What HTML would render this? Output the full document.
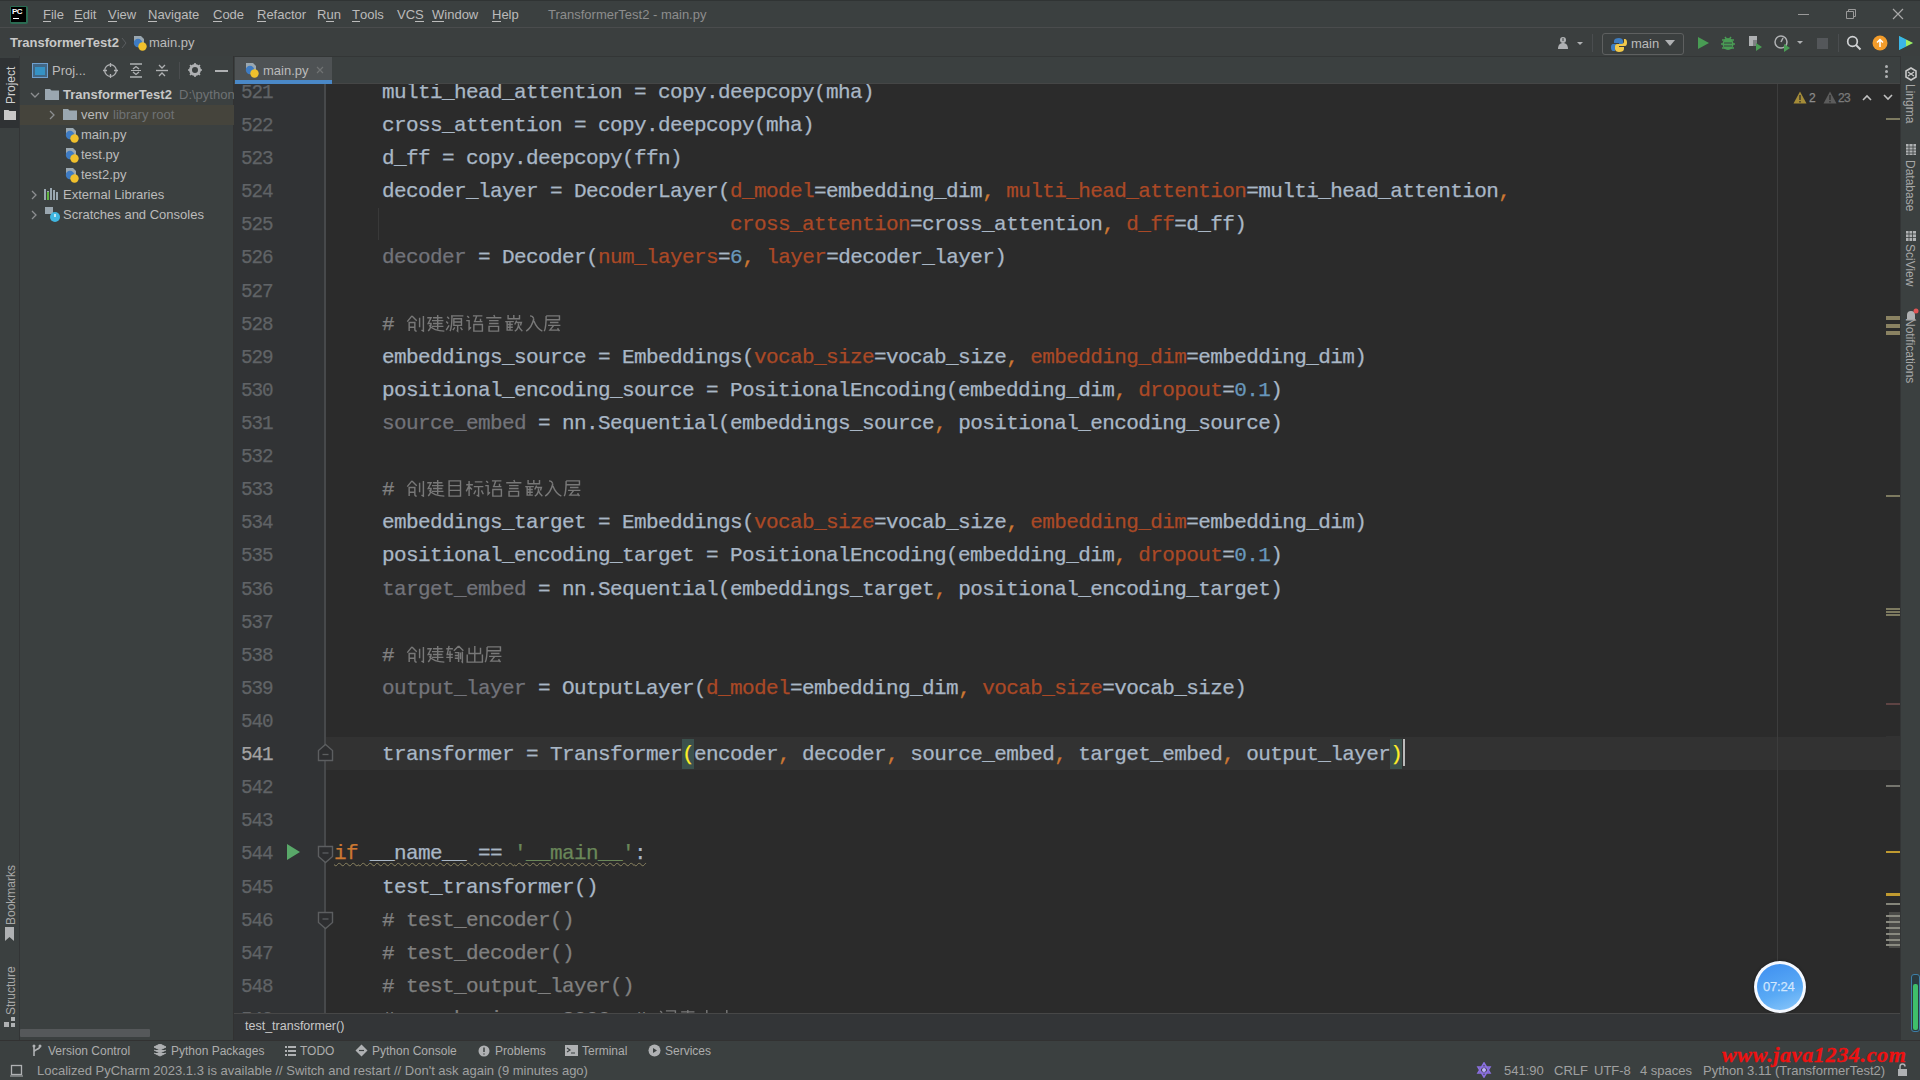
<!DOCTYPE html>
<html><head><meta charset="utf-8">
<style>
*{margin:0;padding:0;box-sizing:border-box}
html,body{width:1920px;height:1080px;overflow:hidden;background:#3b4040;font-family:"Liberation Sans",sans-serif;color:#bbbbbb}
.a{position:absolute}
.ui{font-size:13px;white-space:nowrap}
.tb{top:3px;font-size:12px;color:#adadad}
.st{top:3px;font-size:13px;color:#a0a0a0}
.rv{transform-origin:0 0;transform:rotate(90deg);font-size:12px;color:#a8a8a8}
.mk{left:1561px;width:14px;height:2px}
.mi{top:6px;color:#bbbbbb}
.mi u{text-decoration:none;border-bottom:1px solid #bbbbbb;line-height:13px;display:inline-block}
#menubar{left:0;top:0;width:1920px;height:28px;background:#3b4040;border-top:1px solid #303434;border-bottom:1px solid #4a4c4d}
#navbar{left:0;top:28px;width:1920px;height:29px;background:#3b3f3f;border-bottom:1px solid #333636}
#lstripe{left:0;top:56px;width:20px;height:984px;background:#3b4040;border-right:1px solid #333536}
#proj{left:20px;top:56px;width:214px;height:984px;background:#3b4040;border-right:1px solid #323232}
#tabs{left:234px;top:57px;width:1666px;height:27px;background:#3b4040;border-bottom:1px solid #454646}
#gutter{left:234px;top:84px;width:91px;height:929px;background:#313335;overflow:hidden}
#editor{left:325px;top:84px;width:1575px;height:929px;background:#2b2b2b;overflow:hidden}
#crumbs{left:234px;top:1013px;width:1666px;height:27px;background:#333537;border-top:1px solid #474747}
#rstripe{left:1900px;top:56px;width:20px;height:984px;background:#3b4040;border-left:1px solid #333536}
#toolbar{left:0;top:1040px;width:1920px;height:20px;background:#3b4040;border-top:1px solid #323232}
#status{left:0;top:1060px;width:1920px;height:20px;background:#3b4040}
.code{font-family:"Liberation Mono",monospace;font-size:21px;letter-spacing:-0.6px;white-space:pre;color:#a9b7c6;-webkit-text-stroke:0.25px}
.ln{position:absolute;left:0;width:38.5px;padding-top:1.6px;text-align:right;font-family:"Liberation Mono",monospace;font-size:21px;letter-spacing:-1.2px;transform:scaleX(0.92);transform-origin:100% 50%;color:#606366;height:33px;line-height:33px;white-space:pre}
.ln.cur{color:#a4a3a3}
.line{position:absolute;left:9px;right:0;height:33.11px;line-height:33.11px;padding-top:1.6px}
.line.cur{background:#323232;left:0;padding-left:9px}
.k{color:#cc7832}.n{color:#aa4926}.num{color:#6897bb}.u{color:#72737a}.c{color:#808080}.s{color:#6a8759}
.mp{color:#ffef28;background:#3b514d;padding:4px 0 3px}
.wv{text-decoration:underline wavy #8a8260;text-decoration-thickness:1px;text-underline-offset:3px;text-decoration-skip-ink:none}
.cj{display:inline-block;width:19.6px;height:19px;vertical-align:-3px}
</style></head><body>
<div id="menubar" class="a">
<div class="a" style="left:10px;top:5px;width:18px;height:18px;background:#2a6b52;border-radius:2px"></div>
<div class="a" style="left:11px;top:6px;width:15px;height:15px;background:#000"></div>
<div class="a" style="left:12px;top:6px;font:bold 8px 'Liberation Sans',sans-serif;color:#fff;letter-spacing:-0.5px">PC</div>
<div class="a" style="left:13px;top:17px;width:6px;height:1px;background:#fff"></div>
<div class="a ui mi" style="left:43px"><u>F</u>ile</div>
<div class="a ui mi" style="left:74px"><u>E</u>dit</div>
<div class="a ui mi" style="left:108px"><u>V</u>iew</div>
<div class="a ui mi" style="left:148px"><u>N</u>avigate</div>
<div class="a ui mi" style="left:213px"><u>C</u>ode</div>
<div class="a ui mi" style="left:257px"><u>R</u>efactor</div>
<div class="a ui mi" style="left:317px">R<u>u</u>n</div>
<div class="a ui mi" style="left:352px"><u>T</u>ools</div>
<div class="a ui mi" style="left:397px">VC<u>S</u></div>
<div class="a ui mi" style="left:432px"><u>W</u>indow</div>
<div class="a ui mi" style="left:492px"><u>H</u>elp</div>
<div class="a ui" style="left:548px;top:6px;color:#8d8d8d">TransformerTest2 - main.py</div>
<div class="a" style="left:1798px;top:13px;width:11px;height:1px;background:#9a9a9a"></div>
<svg class="a" style="left:1845px;top:7px" width="12" height="12" viewBox="0 0 12 12"><path d="M1.5 3.5h7v7h-7z M3.5 3.5v-2h7v7h-2" fill="none" stroke="#9a9a9a" stroke-width="1"/></svg>
<svg class="a" style="left:1892px;top:7px" width="12" height="12" viewBox="0 0 12 12"><path d="M1 1L11 11M11 1L1 11" stroke="#a8a8a8" stroke-width="1.2"/></svg>
</div>
<div id="navbar" class="a">
<div class="a ui" style="left:10px;top:7px;font-weight:bold;color:#c8c8c8">TransformerTest2</div>
<svg class="a" style="left:121px;top:9px" width="6" height="12" viewBox="0 0 6 12"><path d="M1 1l4 5-4 5" fill="none" stroke="#5a5d60" stroke-width="1"/></svg>
<svg class="a" style="left:132px;top:7px" width="16" height="16" viewBox="0 0 16 16"><path d="M2 1h7l3 3v5H2z" fill="#9aa7b0"/><circle cx="6" cy="8" r="4.2" fill="#3e7bc2"/><circle cx="10.5" cy="11.5" r="4.2" fill="#f0c02c"/></svg>
<div class="a ui" style="left:149px;top:7px;color:#bbbbbb">main.py</div>
<svg class="a" style="left:1557px;top:8px" width="28" height="14" viewBox="0 0 28 14"><circle cx="6" cy="4" r="3" fill="#afb1b3"/><path d="M1 13c0-4 2-6 5-6s5 2 5 6z" fill="#afb1b3"/><path d="M6 2v3" stroke="#3b4040"/><path d="M20 6h6l-3 3z" fill="#afb1b3"/></svg>
<div class="a" style="left:1592px;top:6px;width:1px;height:18px;background:#4a4d4f"></div>
<div class="a" style="left:1602px;top:5px;width:82px;height:22px;border:1px solid #5e6060;border-radius:3px"></div>
<svg class="a" style="left:1611px;top:9px" width="16" height="16" viewBox="0 0 16 16"><path d="M8 1c-3 0-5 1-5 3v2h5v1H2c-1.5 0-2 1.5-2 3.5S.8 14 2 14h2v-2.5c0-1.5 1-2.5 2.5-2.5h3C11 9 12 8 12 6.5V4c0-2-2-3-4-3z" fill="#3f7dc0"/><path d="M8 15c3 0 5-1 5-3v-2H8V9h6c1.5 0 2-1.5 2-3.5S15.2 2 14 2h-1v2.5c0 1.5-1 2.5-2.5 2.5h-4C5 7 4 8 4 9.5V12c0 2 2 3 4 3z" fill="#f2c94a"/></svg>
<div class="a ui" style="left:1631px;top:8px;color:#bbbbbb">main</div>
<svg class="a" style="left:1665px;top:12px" width="10" height="6" viewBox="0 0 10 6"><path d="M0 0h10L5 6z" fill="#afb1b3"/></svg>
<svg class="a" style="left:1697px;top:8px" width="13" height="14" viewBox="0 0 13 14"><path d="M1 1l11 6-11 6z" fill="#499c54"/></svg>
<svg class="a" style="left:1720px;top:6px" width="16" height="17" viewBox="0 0 16 17"><ellipse cx="8" cy="10" rx="5.5" ry="6" fill="#499c54"/><path d="M2 6h12M1 10h14M2 14h12M5 3l1.5 2M11 3l-1.5 2" stroke="#499c54" stroke-width="1.5"/><path d="M4 9h8M4 12h8" stroke="#3b4040" stroke-width="1"/></svg>
<svg class="a" style="left:1746px;top:6px" width="18" height="18" viewBox="0 0 18 18"><path d="M3 2h8v4H7v6H3z" fill="#afb1b3"/><path d="M7 6h4v6H7z" fill="#7d8082"/><path d="M10 9l6 4-6 4z" fill="#499c54"/></svg>
<svg class="a" style="left:1773px;top:6px" width="34" height="18" viewBox="0 0 34 18"><circle cx="8" cy="8" r="6" fill="none" stroke="#afb1b3" stroke-width="1.5"/><path d="M8 8l2-4" stroke="#afb1b3" stroke-width="1.5"/><path d="M11 10l6 4-6 4z" fill="#499c54"/><path d="M24 7h6l-3 3z" fill="#afb1b3"/></svg>
<div class="a" style="left:1817px;top:10px;width:11px;height:11px;background:#54575a"></div>
<div class="a" style="left:1838px;top:6px;width:1px;height:18px;background:#4a4d4f"></div>
<svg class="a" style="left:1846px;top:7px" width="16" height="16" viewBox="0 0 16 16"><circle cx="6.5" cy="6.5" r="4.8" fill="none" stroke="#d0d2d4" stroke-width="1.7"/><path d="M10 10l4.5 4.5" stroke="#d0d2d4" stroke-width="2"/></svg>
<svg class="a" style="left:1872px;top:7px" width="16" height="16" viewBox="0 0 16 16"><circle cx="8" cy="8" r="7.5" fill="#f39c2a"/><path d="M8 12V5M5 7.5L8 4.5l3 3" stroke="#fff" stroke-width="1.5" fill="none"/></svg>
<svg class="a" style="left:1897px;top:6px" width="18" height="18" viewBox="0 0 18 18"><path d="M2 2l14 7-14 7z" fill="#21d789"/><path d="M2 2l7 3.5v7L2 16z" fill="#3bb5e8"/><path d="M9 5.5l7 3.5-7 3.5z" fill="#fcf84a" opacity=".6"/></svg>
</div>
<div id="lstripe" class="a">
<div class="a" style="left:0;top:2px;width:19px;height:70px;background:#2f3234"></div>
<div class="a ui vt" style="left:4px;top:48px;transform-origin:0 0;transform:rotate(-90deg);font-size:12px;color:#d0d0d0">Project</div>
<svg class="a" style="left:4px;top:53px" width="12" height="11" viewBox="0 0 12 11"><path d="M0 1h4.5l1 1H12v9H0z" fill="#c8c8c8"/></svg>
<div class="a ui" style="left:4px;top:869px;transform-origin:0 0;transform:rotate(-90deg);font-size:12px;color:#a8a8a8">Bookmarks</div>
<svg class="a" style="left:4px;top:871px" width="11" height="14" viewBox="0 0 11 14"><path d="M1 0h9v14l-4.5-4L1 14z" fill="#afb1b3"/></svg>
<div class="a ui" style="left:4px;top:959px;transform-origin:0 0;transform:rotate(-90deg);font-size:12px;color:#a8a8a8">Structure</div>
<svg class="a" style="left:4px;top:961px" width="12" height="10" viewBox="0 0 12 10"><path d="M0 5h5v5H0zM7 0h4v4H7zM7 6h4v4H7z" fill="#afb1b3"/></svg>
</div>
<div id="proj" class="a">
<svg class="a" style="left:12px;top:7px" width="16" height="15" viewBox="0 0 16 15"><rect x="0.5" y="0.5" width="15" height="14" fill="#4a8dc9" opacity=".5"/><rect x="0.5" y="0.5" width="15" height="14" fill="none" stroke="#6e9fcf"/><rect x="3" y="4" width="10" height="8" fill="#3592c4"/></svg>
<div class="a ui" style="left:32px;top:7px;color:#bbbbbb">Proj...</div>
<svg class="a" style="left:83px;top:7px" width="15" height="15" viewBox="0 0 15 15"><circle cx="7.5" cy="7.5" r="5.8" fill="none" stroke="#afb1b3" stroke-width="1.3"/><path d="M7.5 0v4M7.5 11v4M0 7.5h4M11 7.5h4" stroke="#afb1b3" stroke-width="1.3"/></svg>
<svg class="a" style="left:109px;top:7px" width="14" height="15" viewBox="0 0 14 15"><path d="M1 1h12M1 14h12" stroke="#afb1b3" stroke-width="1.4"/><path d="M4 6l3-2.5L10 6M4 9l3 2.5L10 9" stroke="#afb1b3" stroke-width="1.3" fill="none"/><path d="M2 7.5h10" stroke="#afb1b3"/></svg>
<svg class="a" style="left:135px;top:7px" width="14" height="15" viewBox="0 0 14 15"><path d="M1 7.5h12" stroke="#afb1b3" stroke-width="1.4"/><path d="M4 2l3 3 3-3M4 13l3-3 3 3" stroke="#afb1b3" stroke-width="1.3" fill="none"/></svg>
<div class="a" style="left:159px;top:6px;width:1px;height:17px;background:#4a4d4f"></div>
<svg class="a" style="left:168px;top:7px" width="14" height="14" viewBox="0 0 14 14"><circle cx="7" cy="7" r="4.5" fill="none" stroke="#afb1b3" stroke-width="3"/><path d="M7 0v3M7 11v3M0 7h3M11 7h3M2 2l2 2M10 10l2 2M12 2l-2 2M2 12l2-2" stroke="#afb1b3" stroke-width="1.6"/></svg>
<div class="a" style="left:195px;top:14px;width:13px;height:1.5px;background:#afb1b3"></div>
<div class="a" style="left:0;top:49px;width:214px;height:20px;background:#45443c"></div>
<svg class="a" style="left:10px;top:35px" width="10" height="8" viewBox="0 0 10 8"><path d="M1 2l4 4 4-4" fill="none" stroke="#8c8e90" stroke-width="1.3"/></svg>
<svg class="a" style="left:24px;top:31px" width="16" height="14" viewBox="0 0 16 14"><path d="M1 2h5l1.5 1.5H15V13H1z" fill="#9aa7b0"/></svg>
<div class="a ui" style="left:43px;top:31px;color:#c8c8c8;font-weight:bold">TransformerTest2</div>
<div class="a ui" style="left:159px;top:31px;color:#6f7274;width:55px;overflow:hidden">D:\python</div>
<svg class="a" style="left:28px;top:54px" width="8" height="10" viewBox="0 0 8 10"><path d="M2 1l4 4-4 4" fill="none" stroke="#8c8e90" stroke-width="1.3"/></svg>
<svg class="a" style="left:42px;top:51px" width="16" height="14" viewBox="0 0 16 14"><path d="M1 2h5l1.5 1.5H15V13H1z" fill="#9aa7b0"/></svg>
<div class="a ui" style="left:61px;top:51px;color:#bbbbbb">venv</div>
<div class="a ui" style="left:93px;top:51px;color:#6f7274">library root</div>
<svg class="a" style="left:44px;top:71px" width="16" height="16" viewBox="0 0 16 16"><path d="M2 1h7l3 3v5H2z" fill="#9aa7b0"/><circle cx="6" cy="8" r="4.2" fill="#3e7bc2"/><circle cx="10.5" cy="11.5" r="4.2" fill="#f0c02c"/></svg>
<div class="a ui" style="left:61px;top:71px;color:#bbbbbb">main.py</div>
<svg class="a" style="left:44px;top:91px" width="16" height="16" viewBox="0 0 16 16"><path d="M2 1h7l3 3v5H2z" fill="#9aa7b0"/><circle cx="6" cy="8" r="4.2" fill="#3e7bc2"/><circle cx="10.5" cy="11.5" r="4.2" fill="#f0c02c"/></svg>
<div class="a ui" style="left:61px;top:91px;color:#bbbbbb">test.py</div>
<svg class="a" style="left:44px;top:111px" width="16" height="16" viewBox="0 0 16 16"><path d="M2 1h7l3 3v5H2z" fill="#9aa7b0"/><circle cx="6" cy="8" r="4.2" fill="#3e7bc2"/><circle cx="10.5" cy="11.5" r="4.2" fill="#f0c02c"/></svg>
<div class="a ui" style="left:61px;top:111px;color:#bbbbbb">test2.py</div>
<svg class="a" style="left:10px;top:134px" width="8" height="10" viewBox="0 0 8 10"><path d="M2 1l4 4-4 4" fill="none" stroke="#8c8e90" stroke-width="1.3"/></svg>
<svg class="a" style="left:24px;top:131px" width="16" height="14" viewBox="0 0 16 14"><path d="M1 2v11M4 4v9M7 1v12M10 3v10M13 5v8" stroke="#9aa7b0" stroke-width="2"/><path d="M4 5v8" stroke="#62b543" stroke-width="2"/></svg>
<div class="a ui" style="left:43px;top:131px;color:#bbbbbb">External Libraries</div>
<svg class="a" style="left:10px;top:154px" width="8" height="10" viewBox="0 0 8 10"><path d="M2 1l4 4-4 4" fill="none" stroke="#8c8e90" stroke-width="1.3"/></svg>
<svg class="a" style="left:24px;top:150px" width="17" height="17" viewBox="0 0 17 17"><path d="M1 1h8v7H1z" fill="#9aa7b0"/><circle cx="11" cy="11" r="5" fill="#40b6e0"/><path d="M11 8v3" stroke="#fff" stroke-width="1.3"/></svg>
<div class="a ui" style="left:43px;top:151px;color:#bbbbbb">Scratches and Consoles</div>
<div class="a" style="left:0;top:973px;width:130px;height:8px;background:#55585a;border-radius:1px"></div>
</div>
<div id="tabs" class="a">
<div class="a" style="left:1px;top:0;width:97px;height:27px;background:#4e5254"></div>
<div class="a" style="left:1px;top:23px;width:97px;height:4px;background:#4a88c7"></div>
<svg class="a" style="left:10px;top:5px" width="16" height="16" viewBox="0 0 16 16"><path d="M2 1h7l3 3v5H2z" fill="#9aa7b0"/><circle cx="6" cy="8" r="4.2" fill="#3e7bc2"/><circle cx="10.5" cy="11.5" r="4.2" fill="#f0c02c"/></svg>
<div class="a ui" style="left:29px;top:6px;color:#bbbbbb">main.py</div>
<svg class="a" style="left:82px;top:9px" width="8" height="8" viewBox="0 0 8 8"><path d="M1 1l6 6M7 1L1 7" stroke="#6f7273" stroke-width="1.2"/></svg>
<div class="a" style="left:1651px;top:8px;width:3px;height:3px;background:#afb1b3;border-radius:50%"></div>
<div class="a" style="left:1651px;top:13px;width:3px;height:3px;background:#afb1b3;border-radius:50%"></div>
<div class="a" style="left:1651px;top:18px;width:3px;height:3px;background:#afb1b3;border-radius:50%"></div>
</div>
<div id="gutter" class="a code">
<div class="ln" style="top:-9.70px">521</div>
<div class="ln" style="top:23.41px">522</div>
<div class="ln" style="top:56.52px">523</div>
<div class="ln" style="top:89.63px">524</div>
<div class="ln" style="top:122.74px">525</div>
<div class="ln" style="top:155.85px">526</div>
<div class="ln" style="top:188.96px">527</div>
<div class="ln" style="top:222.07px">528</div>
<div class="ln" style="top:255.18px">529</div>
<div class="ln" style="top:288.29px">530</div>
<div class="ln" style="top:321.40px">531</div>
<div class="ln" style="top:354.51px">532</div>
<div class="ln" style="top:387.62px">533</div>
<div class="ln" style="top:420.73px">534</div>
<div class="ln" style="top:453.84px">535</div>
<div class="ln" style="top:486.95px">536</div>
<div class="ln" style="top:520.06px">537</div>
<div class="ln" style="top:553.17px">538</div>
<div class="ln" style="top:586.28px">539</div>
<div class="ln" style="top:619.39px">540</div>
<div class="ln cur" style="top:652.50px">541</div>
<div class="ln" style="top:685.61px">542</div>
<div class="ln" style="top:718.72px">543</div>
<div class="ln" style="top:751.83px">544</div>
<div class="ln" style="top:784.94px">545</div>
<div class="ln" style="top:818.05px">546</div>
<div class="ln" style="top:851.16px">547</div>
<div class="ln" style="top:884.27px">548</div>
<div class="ln" style="top:917.38px">549</div>

</div>
<div id="editor" class="a code">
<div class="line" style="top:-9.70px">    multi_head_attention = copy.deepcopy(mha)</div>
<div class="line" style="top:23.41px">    cross_attention = copy.deepcopy(mha)</div>
<div class="line" style="top:56.52px">    d_ff = copy.deepcopy(ffn)</div>
<div class="line" style="top:89.63px">    decoder_layer = DecoderLayer(<span class="n">d_model</span>=embedding_dim<span class="k">, </span><span class="n">multi_head_attention</span>=multi_head_attention<span class="k">,</span></div>
<div class="line" style="top:122.74px">                                 <span class="n">cross_attention</span>=cross_attention<span class="k">, </span><span class="n">d_ff</span>=d_ff)</div>
<div class="line" style="top:155.85px"><span class="u">    decoder</span> = Decoder(<span class="n">num_layers</span>=<span class="num">6</span><span class="k">, </span><span class="n">layer</span>=decoder_layer)</div>
<div class="line" style="top:188.96px"></div>
<div class="line" style="top:222.07px"><span class="c">    # </span><svg class="cj" width="20" height="20" viewBox="0 0 20 20"><path d="M6 2L1 8M6 2l5 5M3 9h6v5H3zM3 14v4M9 14v2q0 2 2 2M14 4v10M18 2v16l-2-1" fill="none" stroke="#787878" stroke-width="1.5"/></svg><svg class="cj" width="20" height="20" viewBox="0 0 20 20"><path d="M1 4h4l-3 6h3q0 5-3 8M3 12q5 6 16 6M7 4h10M6 7h12M7 10h10M6 13h12M12 1v15" fill="none" stroke="#787878" stroke-width="1.5"/></svg><svg class="cj" width="20" height="20" viewBox="0 0 20 20"><path d="M2 3l2 2M1 8l2 2M1 17l3-5M6 2h13M7 2q0 12-2 16M9 5h8v7h-8zM9 8.5h8M13 12v6l-1-1M10 14l-2 3M16 14l2 3" fill="none" stroke="#787878" stroke-width="1.5"/></svg><svg class="cj" width="20" height="20" viewBox="0 0 20 20"><path d="M2 2l2 2M1 7h3v9l2-2M8 2h10M12 2l-2 6M9 8h9M16 5v3M9 11h9v7H9zM9 18h9" fill="none" stroke="#787878" stroke-width="1.5"/></svg><svg class="cj" width="20" height="20" viewBox="0 0 20 20"><path d="M10 1l1 2M2 4h16M5 7h10M5 10h10M5 13h10v5H5z" fill="none" stroke="#787878" stroke-width="1.5"/></svg><svg class="cj" width="20" height="20" viewBox="0 0 20 20"><path d="M4 1v4h12V1M10 1v4M1 8h9M3 8v9h6M3 11h6M3 14h6M6 8v9M13 7l-2 4M13 9h5l-1 3M15 10q0 6-4 8M15 12q1 4 4 6" fill="none" stroke="#787878" stroke-width="1.5"/></svg><svg class="cj" width="20" height="20" viewBox="0 0 20 20"><path d="M6 2q3 0 4 3M10 5q-2 9-8 13M10 7q3 8 9 11" fill="none" stroke="#787878" stroke-width="1.5"/></svg><svg class="cj" width="20" height="20" viewBox="0 0 20 20"><path d="M3 2h14v4H3M3 2q0 12-2 16M7 9h9M5 12h13M11 12l-4 5h9M15 15l2 3" fill="none" stroke="#787878" stroke-width="1.5"/></svg></div>
<div class="line" style="top:255.18px">    embeddings_source = Embeddings(<span class="n">vocab_size</span>=vocab_size<span class="k">, </span><span class="n">embedding_dim</span>=embedding_dim)</div>
<div class="line" style="top:288.29px">    positional_encoding_source = PositionalEncoding(embedding_dim<span class="k">, </span><span class="n">dropout</span>=<span class="num">0.1</span>)</div>
<div class="line" style="top:321.40px"><span class="u">    source_embed</span> = nn.Sequential(embeddings_source<span class="k">, </span>positional_encoding_source)</div>
<div class="line" style="top:354.51px"></div>
<div class="line" style="top:387.62px"><span class="c">    # </span><svg class="cj" width="20" height="20" viewBox="0 0 20 20"><path d="M6 2L1 8M6 2l5 5M3 9h6v5H3zM3 14v4M9 14v2q0 2 2 2M14 4v10M18 2v16l-2-1" fill="none" stroke="#787878" stroke-width="1.5"/></svg><svg class="cj" width="20" height="20" viewBox="0 0 20 20"><path d="M1 4h4l-3 6h3q0 5-3 8M3 12q5 6 16 6M7 4h10M6 7h12M7 10h10M6 13h12M12 1v15" fill="none" stroke="#787878" stroke-width="1.5"/></svg><svg class="cj" width="20" height="20" viewBox="0 0 20 20"><path d="M4 2h12v16H4zM4 7h12M4 12h12" fill="none" stroke="#787878" stroke-width="1.5"/></svg><svg class="cj" width="20" height="20" viewBox="0 0 20 20"><path d="M1 6h7M4 2v16M4 7l-3 6M4 8l3 3M10 3h8M9 8h10M14 8v10l-2-1M11 12l-2 4M17 12l2 4" fill="none" stroke="#787878" stroke-width="1.5"/></svg><svg class="cj" width="20" height="20" viewBox="0 0 20 20"><path d="M2 2l2 2M1 7h3v9l2-2M8 2h10M12 2l-2 6M9 8h9M16 5v3M9 11h9v7H9zM9 18h9" fill="none" stroke="#787878" stroke-width="1.5"/></svg><svg class="cj" width="20" height="20" viewBox="0 0 20 20"><path d="M10 1l1 2M2 4h16M5 7h10M5 10h10M5 13h10v5H5z" fill="none" stroke="#787878" stroke-width="1.5"/></svg><svg class="cj" width="20" height="20" viewBox="0 0 20 20"><path d="M4 1v4h12V1M10 1v4M1 8h9M3 8v9h6M3 11h6M3 14h6M6 8v9M13 7l-2 4M13 9h5l-1 3M15 10q0 6-4 8M15 12q1 4 4 6" fill="none" stroke="#787878" stroke-width="1.5"/></svg><svg class="cj" width="20" height="20" viewBox="0 0 20 20"><path d="M6 2q3 0 4 3M10 5q-2 9-8 13M10 7q3 8 9 11" fill="none" stroke="#787878" stroke-width="1.5"/></svg><svg class="cj" width="20" height="20" viewBox="0 0 20 20"><path d="M3 2h14v4H3M3 2q0 12-2 16M7 9h9M5 12h13M11 12l-4 5h9M15 15l2 3" fill="none" stroke="#787878" stroke-width="1.5"/></svg></div>
<div class="line" style="top:420.73px">    embeddings_target = Embeddings(<span class="n">vocab_size</span>=vocab_size<span class="k">, </span><span class="n">embedding_dim</span>=embedding_dim)</div>
<div class="line" style="top:453.84px">    positional_encoding_target = PositionalEncoding(embedding_dim<span class="k">, </span><span class="n">dropout</span>=<span class="num">0.1</span>)</div>
<div class="line" style="top:486.95px"><span class="u">    target_embed</span> = nn.Sequential(embeddings_target<span class="k">, </span>positional_encoding_target)</div>
<div class="line" style="top:520.06px"></div>
<div class="line" style="top:553.17px"><span class="c">    # </span><svg class="cj" width="20" height="20" viewBox="0 0 20 20"><path d="M6 2L1 8M6 2l5 5M3 9h6v5H3zM3 14v4M9 14v2q0 2 2 2M14 4v10M18 2v16l-2-1" fill="none" stroke="#787878" stroke-width="1.5"/></svg><svg class="cj" width="20" height="20" viewBox="0 0 20 20"><path d="M1 4h4l-3 6h3q0 5-3 8M3 12q5 6 16 6M7 4h10M6 7h12M7 10h10M6 13h12M12 1v15" fill="none" stroke="#787878" stroke-width="1.5"/></svg><svg class="cj" width="20" height="20" viewBox="0 0 20 20"><path d="M1 4h7M4 1l-2 9h6M5 6v12M1 13h7M14 1l-5 5M14 1l5 5M10 8h4v10M10 11h4M10 14h4M16 8v7M18 7v11l-1-1" fill="none" stroke="#787878" stroke-width="1.5"/></svg><svg class="cj" width="20" height="20" viewBox="0 0 20 20"><path d="M10 1v17M4 3v6h12V3M2 10v8h16v-8" fill="none" stroke="#787878" stroke-width="1.5"/></svg><svg class="cj" width="20" height="20" viewBox="0 0 20 20"><path d="M3 2h14v4H3M3 2q0 12-2 16M7 9h9M5 12h13M11 12l-4 5h9M15 15l2 3" fill="none" stroke="#787878" stroke-width="1.5"/></svg></div>
<div class="line" style="top:586.28px"><span class="u">    output_layer</span> = OutputLayer(<span class="n">d_model</span>=embedding_dim<span class="k">, </span><span class="n">vocab_size</span>=vocab_size)</div>
<div class="line" style="top:619.39px"></div>
<div class="line cur" style="top:652.50px">    transformer = Transformer<span class="mp">(</span>encoder<span class="k">, </span>decoder<span class="k">, </span>source_embed<span class="k">, </span>target_embed<span class="k">, </span>output_layer<span class="mp">)</span></div>
<div class="line" style="top:685.61px"></div>
<div class="line" style="top:718.72px"></div>
<div class="line" style="top:751.83px"><span class="wv"><span class="k">if</span> __name__ == <span class="s">&#x27;__main__&#x27;</span>:</span></div>
<div class="line" style="top:784.94px">    test_transformer()</div>
<div class="line" style="top:818.05px"><span class="c">    # test_encoder()</span></div>
<div class="line" style="top:851.16px"><span class="c">    # test_decoder()</span></div>
<div class="line" style="top:884.27px"><span class="c">    # test_output_layer()</span></div>
<div class="line" style="top:917.38px"><span class="c">    # vocab_size = 2000  # </span><svg class="cj" width="20" height="20" viewBox="0 0 20 20"><path d="M2 2l2 2M1 7h3v9l2-2M8 2h10v16l-2-1M9 6h6M9 9h5v6H9z" fill="none" stroke="#787878" stroke-width="1.5"/></svg><svg class="cj" width="20" height="20" viewBox="0 0 20 20"><path d="M3 3h14M4 6h12M2 9h16M10 1v8M9 10q-3 5-7 7M9 12v6l3-2M12 10q2 4 6 8M16 11l-3 3" fill="none" stroke="#787878" stroke-width="1.5"/></svg><svg class="cj" width="20" height="20" viewBox="0 0 20 20"><path d="M2 7h16M10 1v6q-2 8-8 11M10 8q3 7 8 10" fill="none" stroke="#787878" stroke-width="1.5"/></svg><svg class="cj" width="20" height="20" viewBox="0 0 20 20"><path d="M10 1v16l-2-1M5 7l-3 6M15 7l3 6" fill="none" stroke="#787878" stroke-width="1.5"/></svg></div>

<div class="a" style="left:1452px;top:0;width:1px;height:929px;background:#3d3d3d"></div>
<div class="a" style="left:53px;top:124px;width:1px;height:32px;background:#393939"></div>
<svg class="a" style="left:1468px;top:7px" width="14" height="13" viewBox="0 0 14 13"><path d="M7 0.5l6.5 12H0.5z" fill="#a58c38"/><path d="M7 4v5M7 10v1.5" stroke="#2b2b2b" stroke-width="1.3"/></svg>
<div class="a ui" style="left:1484px;top:7px;font-family:'Liberation Sans',sans-serif;font-size:12px;color:#8c8c8c">2</div>
<svg class="a" style="left:1498px;top:7px" width="14" height="13" viewBox="0 0 14 13"><path d="M7 0.5l6.5 12H0.5z" fill="#5c5c5c"/><path d="M7 4v5M7 10v1.5" stroke="#2b2b2b" stroke-width="1.3"/></svg>
<div class="a ui" style="left:1513px;top:7px;font-family:'Liberation Sans',sans-serif;font-size:12px;color:#7a7a7a">23</div>
<svg class="a" style="left:1537px;top:10px" width="10" height="7" viewBox="0 0 10 7"><path d="M1 6l4-4 4 4" fill="none" stroke="#c0c0c0" stroke-width="1.6"/></svg>
<svg class="a" style="left:1558px;top:10px" width="10" height="7" viewBox="0 0 10 7"><path d="M1 1l4 4 4-4" fill="none" stroke="#c0c0c0" stroke-width="1.6"/></svg>
<div class="a" style="left:1561px;top:652px;width:14px;height:33px;background:#323232"></div>
<div class="a" style="left:1078px;top:655px;width:2px;height:27px;background:#bbbbbb"></div>
<div class="a mk" style="top:34px;background:#7d7a60"></div>
<div class="a mk" style="top:232px;height:4px;background:#8a8262"></div>
<div class="a mk" style="top:240px;height:4px;background:#8a8262"></div>
<div class="a mk" style="top:247px;height:4px;background:#8a8262"></div>
<div class="a mk" style="top:411px;background:#7d7a60"></div>
<div class="a mk" style="top:524px;background:#7d7a60"></div>
<div class="a mk" style="top:527px;background:#7d7a60"></div>
<div class="a mk" style="top:530px;background:#7d7a60"></div>
<div class="a mk" style="top:619px;background:#5e4444"></div>
<div class="a mk" style="top:701px;background:#75756e"></div>
<div class="a mk" style="top:767px;background:#c09a30"></div>
<div class="a mk" style="top:809px;height:3px;background:#c09a30"></div>
<div class="a mk" style="top:819px;background:#85857a"></div>
<div class="a" style="left:1564px;top:828px;width:11px;height:36px;background:#4a4a47"></div>
<div class="a mk" style="top:831px;background:#8a8a80"></div>
<div class="a mk" style="top:837px;background:#8a8a80"></div>
<div class="a mk" style="top:843px;background:#8a8a80"></div>
<div class="a mk" style="top:849px;background:#8a8a80"></div>
<div class="a mk" style="top:855px;background:#8a8a80"></div>
<div class="a mk" style="top:860px;background:#8a8a80"></div>
<div class="a" style="left:1429px;top:877px;width:52px;height:52px;border-radius:50%;background:#f4f8ff;box-shadow:0 0 3px rgba(0,0,0,.4)"></div>
<div class="a" style="left:1432px;top:880px;width:46px;height:46px;border-radius:50%;background:linear-gradient(160deg,#3d8ef0,#5aaaf5 60%,#8cc8fa)"></div>
<div class="a ui" style="left:1438px;top:895px;font-family:'Liberation Sans',sans-serif;font-size:13px;color:rgba(225,240,255,.85);letter-spacing:-0.2px">07:24</div>
</div>

<div class="a" style="left:324px;top:84px;width:2px;height:929px;background:#47494b"></div>
<svg class="a" style="left:317px;top:743px" width="17" height="19" viewBox="0 0 17 19"><path d="M1.5 17.5V7.5l7-6 7 6v10z" fill="#2d2e30" stroke="#5c5e60" stroke-width="1.4"/><path d="M5.5 11.5h6" stroke="#5c5e60" stroke-width="1.3"/></svg>
<svg class="a" style="left:317px;top:845px" width="17" height="19" viewBox="0 0 17 19"><path d="M1.5 1.5v10l7 6 7-6v-10z" fill="#2d2e30" stroke="#5c5e60" stroke-width="1.4"/><path d="M5.5 8h6" stroke="#5c5e60" stroke-width="1.3"/></svg>
<svg class="a" style="left:317px;top:911px" width="17" height="19" viewBox="0 0 17 19"><path d="M1.5 1.5v10l7 6 7-6v-10z" fill="#2d2e30" stroke="#5c5e60" stroke-width="1.4"/><path d="M5.5 8h6" stroke="#5c5e60" stroke-width="1.3"/></svg>
<svg class="a" style="left:286px;top:843px" width="15" height="18" viewBox="0 0 15 18"><path d="M1 1l13 8-13 8z" fill="#59a869"/></svg>

<div id="crumbs" class="a">
<div class="a ui" style="left:11px;top:5px;color:#c8c8c8;font-size:12.5px">test_transformer()</div>
</div>
<div id="rstripe" class="a">
<svg class="a" style="left:3px;top:11px" width="14" height="14" viewBox="0 0 14 14"><path d="M7 1l5 3v6l-5 3-5-3V4z" fill="none" stroke="#c8c8c8" stroke-width="1.6"/><path d="M4 5l6 4M10 5l-6 4" stroke="#c8c8c8" stroke-width="1.2"/></svg>
<div class="a ui rv" style="left:16px;top:28px">Lingma</div>
<svg class="a" style="left:5px;top:88px" width="10" height="11" viewBox="0 0 10 11"><path d="M0 0h10v11H0z" fill="#afb1b3"/><path d="M0 3h10M0 6h10M0 9h10M3 0v11M7 0v11" stroke="#3b4040" stroke-width="0.8"/></svg>
<div class="a ui rv" style="left:16px;top:104px">Database</div>
<svg class="a" style="left:5px;top:175px" width="10" height="10" viewBox="0 0 10 10"><path d="M0 0h10v10H0z" fill="#afb1b3"/><path d="M0 3h10M0 6.5h10M3 0v10M6.5 0v10" stroke="#3b4040" stroke-width="0.8"/></svg>
<div class="a ui rv" style="left:16px;top:188px">SciView</div>
<svg class="a" style="left:3px;top:252px" width="15" height="15" viewBox="0 0 15 15"><path d="M3 11V7a4 4 0 0 1 8 0v4l1.5 1.5h-11z" fill="#afb1b3"/><circle cx="12" cy="3" r="2.5" fill="#e05555"/></svg>
<div class="a ui rv" style="left:16px;top:262px">Notifications</div>
<div class="a" style="left:10px;top:918px;width:9px;height:58px;border:1px solid #3d7ea6;border-radius:3px;background:#2b3a3f"></div>
<div class="a" style="left:12px;top:928px;width:5px;height:46px;background:#3fbf6a;border-radius:2px"></div>
</div>
<div id="toolbar" class="a">
<svg class="a" style="left:32px;top:3px" width="10" height="13" viewBox="0 0 10 13"><path d="M2 1v11M2 8c0-3 6-2 6-6" fill="none" stroke="#afb1b3" stroke-width="1.6"/><circle cx="2" cy="2" r="1.5" fill="#afb1b3"/><circle cx="8" cy="2" r="1.5" fill="#afb1b3"/></svg>
<div class="a ui tb" style="left:48px">Version Control</div>
<svg class="a" style="left:154px;top:3px" width="12" height="13" viewBox="0 0 12 13"><path d="M6 0l6 3-6 3-6-3z M0 6l6 3 6-3 M0 9l6 3 6-3" fill="#afb1b3" stroke="#afb1b3" stroke-width="1"/></svg>
<div class="a ui tb" style="left:171px">Python Packages</div>
<svg class="a" style="left:285px;top:4px" width="11" height="11" viewBox="0 0 11 11"><path d="M0 1h2v2H0zM0 5h2v2H0zM0 9h2v2H0zM3 1h8v2H3zM3 5h8v2H3zM3 9h8v2H3z" fill="#afb1b3"/></svg>
<div class="a ui tb" style="left:300px">TODO</div>
<svg class="a" style="left:355px;top:3px" width="13" height="13" viewBox="0 0 13 13"><path d="M6.5 0.5l6 6-6 6-6-6z" fill="#afb1b3"/><path d="M4 6.5h5" stroke="#3b4040" stroke-width="1.2"/></svg>
<div class="a ui tb" style="left:372px">Python Console</div>
<svg class="a" style="left:478px;top:4px" width="12" height="12" viewBox="0 0 12 12"><circle cx="6" cy="6" r="5.5" fill="#afb1b3"/><path d="M6 2.5v4.5M6 8.5v1" stroke="#3b4040" stroke-width="1.5"/></svg>
<div class="a ui tb" style="left:495px">Problems</div>
<svg class="a" style="left:565px;top:4px" width="13" height="11" viewBox="0 0 13 11"><rect x="0" y="0" width="13" height="11" fill="#afb1b3"/><path d="M2 3l3 2-3 2M6 8h4" stroke="#3b4040" stroke-width="1.2" fill="none"/></svg>
<div class="a ui tb" style="left:582px">Terminal</div>
<svg class="a" style="left:648px;top:3px" width="13" height="13" viewBox="0 0 13 13"><circle cx="6.5" cy="6.5" r="6" fill="#afb1b3"/><path d="M5 4l4 2.5L5 9z" fill="#3b4040"/></svg>
<div class="a ui tb" style="left:665px">Services</div>
</div>
<div id="status" class="a">
<svg class="a" style="left:10px;top:4px" width="13" height="13" viewBox="0 0 13 13"><rect x="1.5" y="1.5" width="10" height="9" fill="none" stroke="#afb1b3" stroke-width="1.3"/><path d="M0 12h13" stroke="#afb1b3"/></svg>
<div class="a ui st" style="left:37px">Localized PyCharm 2023.1.3 is available // Switch and restart // Don't ask again (9 minutes ago)</div>
<svg class="a" style="left:1476px;top:2px" width="16" height="16" viewBox="0 0 16 16"><path d="M8 1l6 10H2z M8 15L2 5h12z" fill="none" stroke="#8a6fe0" stroke-width="1.6"/><circle cx="8" cy="8" r="2" fill="#c0b0ff"/></svg>
<div class="a ui st" style="left:1504px">541:90</div>
<div class="a ui st" style="left:1554px">CRLF</div>
<div class="a ui st" style="left:1594px">UTF-8</div>
<div class="a ui st" style="left:1640px">4 spaces</div>
<div class="a ui st" style="left:1703px">Python 3.11 (TransformerTest2)</div>
<svg class="a" style="left:1896px;top:3px" width="13" height="13" viewBox="0 0 13 13"><path d="M2 6h9v7H2z" fill="#afb1b3"/><path d="M4 6V3.5a2.5 2.5 0 0 1 5 0" fill="none" stroke="#afb1b3" stroke-width="1.5"/></svg>
</div>
<div class="a" style="left:1722px;top:1044px;font:italic bold 20px 'Liberation Serif',serif;color:#ee1111;letter-spacing:0.6px;white-space:nowrap;transform:scaleX(1.1);transform-origin:0 0;-webkit-text-stroke:0.3px #ee1111">www.java1234.com</div>
</body></html>
